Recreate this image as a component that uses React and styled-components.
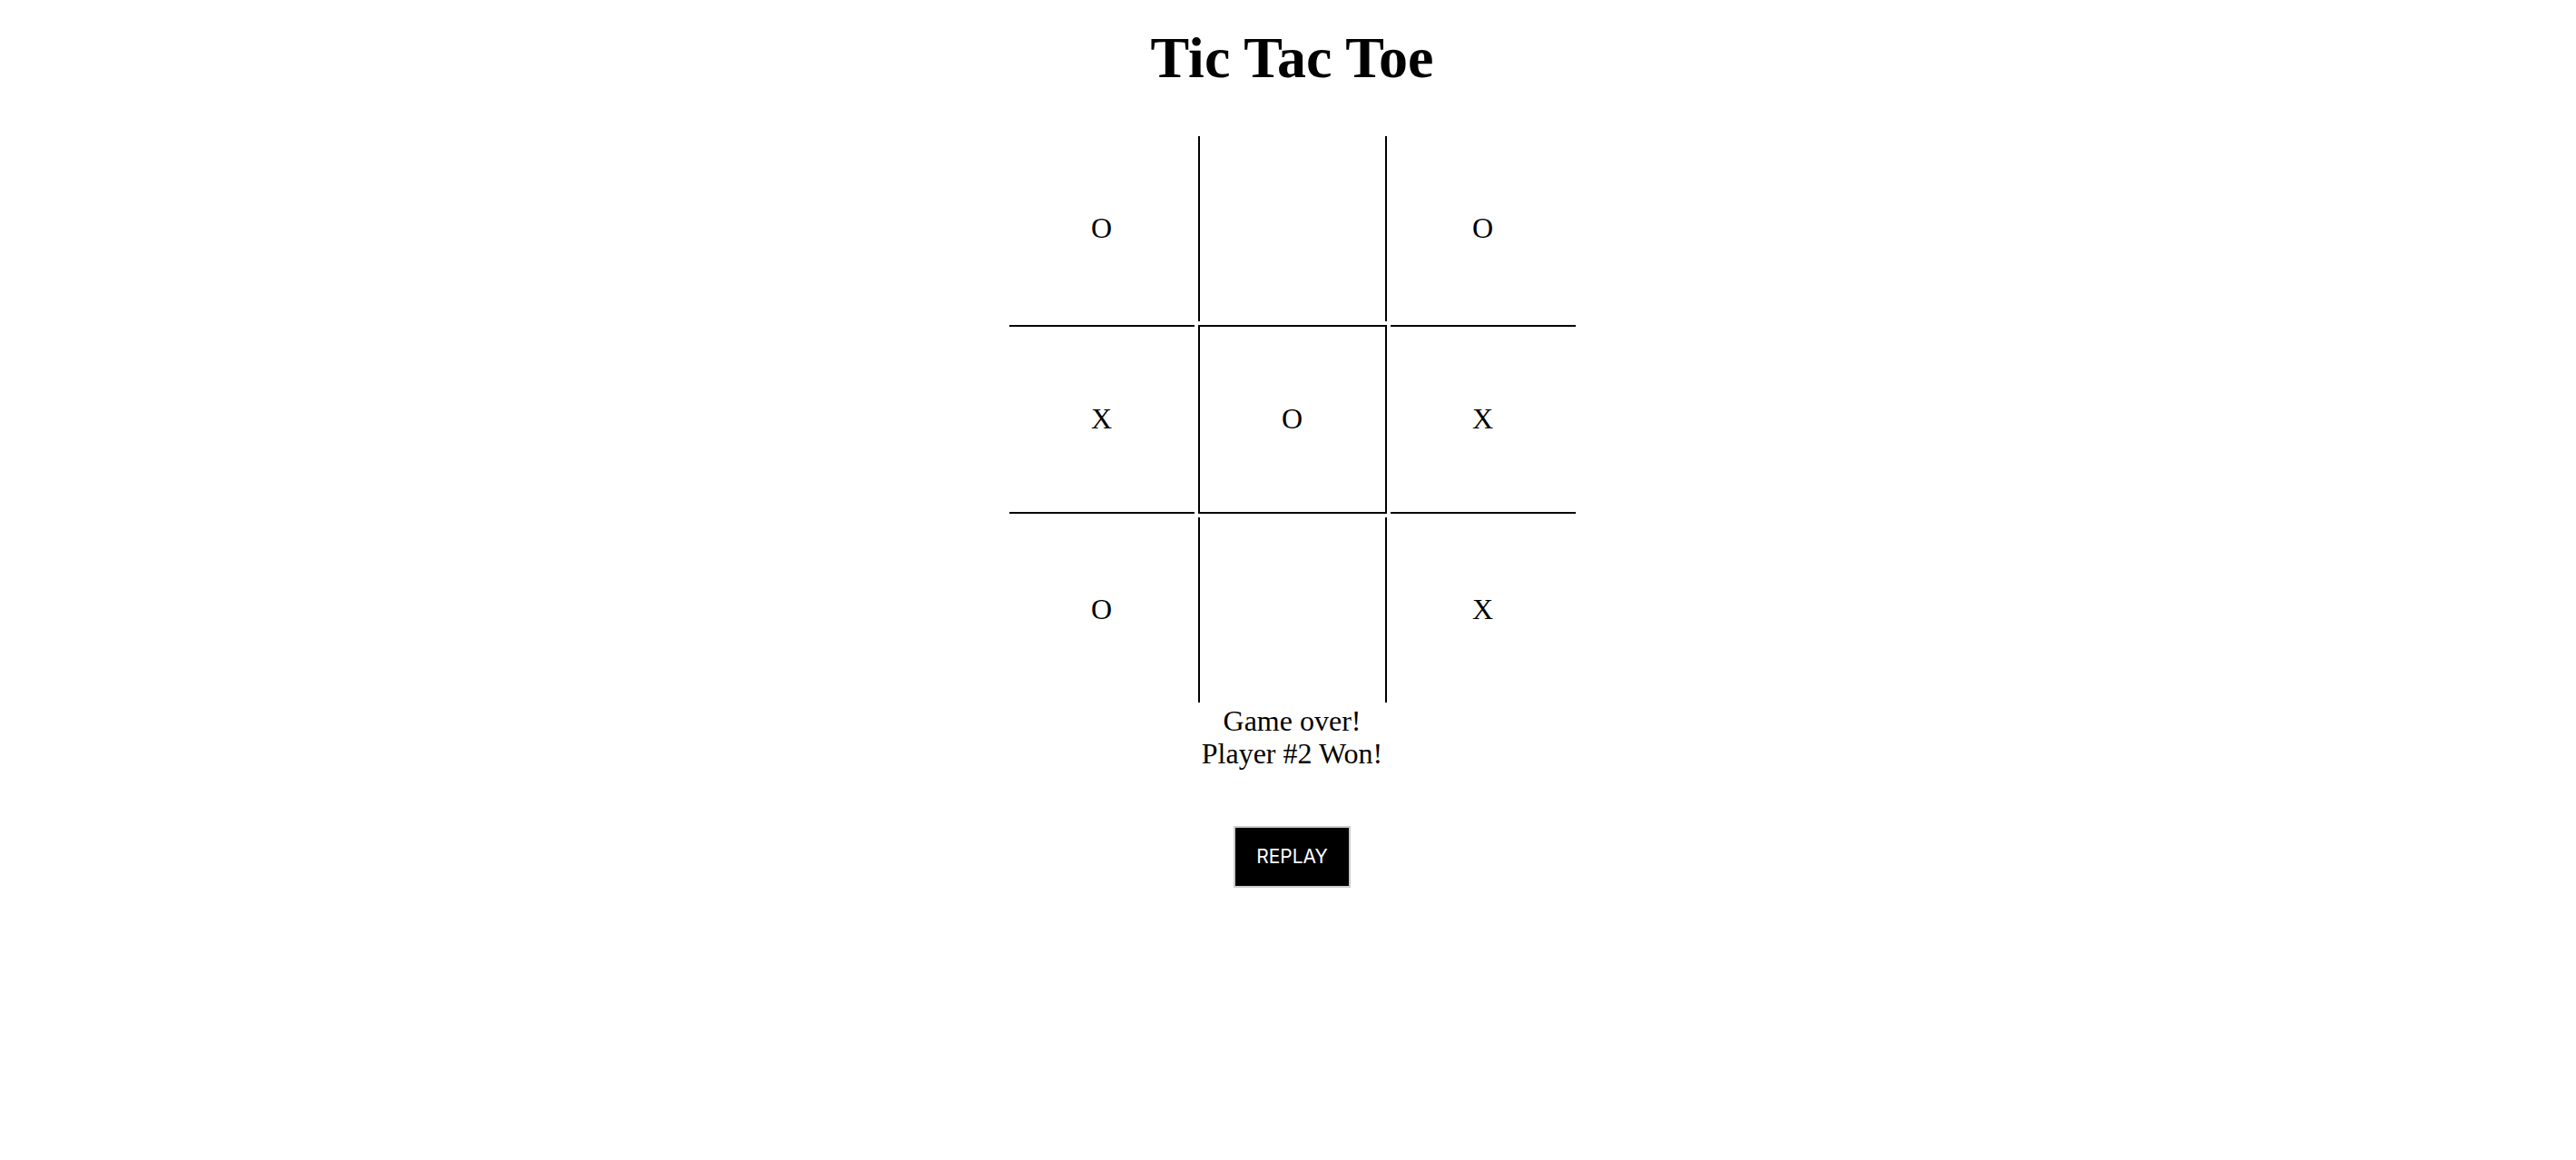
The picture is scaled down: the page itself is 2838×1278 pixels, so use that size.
import styled, { createGlobalStyle, css } from "styled-components";

const GlobalStyle = createGlobalStyle`
  html, body {
    margin: 0;
    padding: 0;
    background: #ffffff;
  }
  body {
    font-family: "Liberation Serif", "Times New Roman", serif;
    font-size: 32px;
    color: #000000;
  }
`;

const Page = styled.main`
  display: flex;
  flex-direction: column;
  align-items: center;
  padding-left: 9px;
  text-align: center;
`;

const Title = styled.h1`
  font-size: 64px;
  font-weight: bold;
  line-height: 74px;
  margin: 27px 0 45px;
`;

const Board = styled.div`
  display: grid;
  grid-template-columns: repeat(3, auto);
  gap: 4px;
  padding: 4px;
`;

const Cell = styled.div`
  width: 200px;
  height: 198px;
  padding: 2px 2px 4px;
  display: flex;
  align-items: center;
  justify-content: center;
  font-size: 32px;
  line-height: normal;

  ${({ $midCol }) =>
    $midCol &&
    css`
      border-left: 2px solid #000;
      border-right: 2px solid #000;
    `}

  ${({ $midRow }) =>
    $midRow &&
    css`
      border-top: 2px solid #000;
      border-bottom: 2px solid #000;
    `}
`;

const Status = styled.div`
  margin-top: -2px;
  font-size: 32px;
  line-height: 36px;
`;

const ReplayButton = styled.button`
  margin-top: 62px;
  padding: 20px 23px;
  background: #000000;
  color: #ffffff;
  border: 2px solid #cccccc;
  font-family: Inter, "Liberation Sans", sans-serif;
  font-size: 21px;
  line-height: 24px;
  cursor: pointer;
`;

const squares = ["O", "", "O", "X", "O", "X", "O", "", "X"];

function App() {
  return (
    <>
      <GlobalStyle />
      <Page>
        <Title>Tic Tac Toe</Title>
        <Board>
          {squares.map((value, i) => (
            <Cell key={i} $midCol={i % 3 === 1} $midRow={Math.floor(i / 3) === 1}>
              {value}
            </Cell>
          ))}
        </Board>
        <Status>
          <div>Game over!</div>
          <div>Player #2 Won!</div>
        </Status>
        <ReplayButton>REPLAY</ReplayButton>
      </Page>
    </>
  );
}

export default App;
